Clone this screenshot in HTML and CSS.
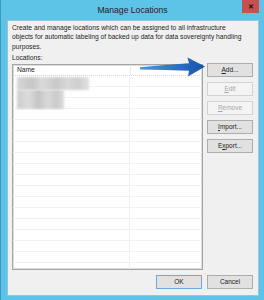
FILE: index.html
```html
<!DOCTYPE html>
<html lang="en">
<head>
	<meta charset="UTF-8">
	<title>Manage Locations</title>
	<link rel="stylesheet" href="styles.css">
</head>
<body>
<div class="window">
	<div class="titlebar">
		<span></span>
		<div class="title">Manage Locations</div>
		<div class="close">&#x2715;</div>
	</div>
	<div class="panel">
		<p class="desc">Create and manage locations which can be assigned to all infrastructure<br>objects for automatic labeling of backed up data for data sovereignty handling<br>purposes.</p>
		<div class="label">Locations:</div>
		<div class="main">
			<div class="list">
				<div class="list-head">
					<div class="col-name">Name</div>
					<div class="col-rest"></div>
				</div>
				<div class="list-body">
					<div class="blur blur-1"></div>
					<div class="blur blur-2"></div>
				</div>
			</div>
			<div class="side">
				<div class="btn"><u>A</u>dd...</div>
				<div class="btn off"><u>E</u>dit</div>
				<div class="btn off"><u>R</u>emove</div>
				<div class="btn"><u>I</u>mport...</div>
				<div class="btn">E<u>x</u>port...</div>
			</div>
		</div>
		<div class="footer">
			<div class="btn default">OK</div>
			<div class="btn">Cancel</div>
		</div>
	</div>
	<!-- arrow pointing at Add -->
	<svg class="arrow" width="264" height="300" viewBox="0 0 264 300">
		<defs>
			<linearGradient id="ag" x1="0" y1="0" x2="1" y2="0">
				<stop offset="0" stop-color="#4c97e0"/>
				<stop offset="1" stop-color="#1553ad"/>
			</linearGradient>
		</defs>
		<path d="M140 67.2 Q165 64.5 189 63.2 L187.5 57.5 L205 66.5 L188 76.5 L189 70.8 Q165 69.5 140 69.4 Z" fill="url(#ag)"/>
	</svg>
</div>
</body>
</html>
```
FILE: styles.css
```css
body{
	margin: 0;
	font-family: "Liberation Sans", Arial, sans-serif;
	color: #1e1e1e;
}
.window{
	position: relative;
	width: 264px;
	height: 300px;
	box-sizing: border-box;
	background: #5ec4e7;
	border-left: 1px solid #3d98c2;
	display: flex;
	flex-direction: column;
}
.titlebar{
	height: 19px;
	display: grid;
	grid-template-columns: 1fr auto 1fr;
	align-items: center;
}
.title{
	font-size: 8.6px;
	color: #222;
	padding-top: 1px;
}
.close{
	justify-self: end;
	align-self: start;
	width: 17px;
	height: 13px;
	margin-right: 5px;
	background: #c75050;
	color: #111;
	font-size: 7px;
	font-weight: bold;
	text-align: center;
	line-height: 13px;
}
.panel{
	flex: 1;
	margin: 1px 5px 4px 6px;
	background: #f0f0f0;
	border: 1px solid #96c7dc;
	padding: 0 5px 6px 4px;
	display: flex;
	flex-direction: column;
	font-size: 6.7px;
}
.desc{
	margin: 2px 0 0;
	line-height: 9.4px;
}
.label{
	margin-top: 2px;
	line-height: 9px;
}
.main{
	display: flex;
	gap: 4px;
	margin-top: 2px;
}
.list{
	width: 192px;
	height: 206px;
	box-sizing: border-box;
	border: 1px solid #a5a5a5;
	box-shadow: inset 0 0 0 1px #dcdcdc;
	background: #fff;
	display: flex;
	flex-direction: column;
}
.list-head{
	display: flex;
	height: 10px;
	border-bottom: 1px dotted #d8d8d8;
}
.col-name{
	width: 113px;
	padding-left: 4px;
	line-height: 10px;
	border-right: 1px solid #ececec;
}
.list-body{
	position: relative;
	flex: 1;
	background:
		linear-gradient(to right, transparent 116px, #f0f0f0 116px, #f0f0f0 117px, transparent 117px),
		repeating-linear-gradient(to bottom, transparent 0, transparent 10px, #f1f1f1 10px, #f1f1f1 11px);
}
.blur{
	margin-left: 4px;
	filter: blur(1.2px);
}
.blur-1{
	width: 72px;
	height: 13px;
	margin-top: 1px;
	background:
		linear-gradient(to right, #d6d6d6 0, #c6c6c6 20%, #dadada 35%, #c9c9c9 55%, #d8d8d8 70%, #cfcfcf 85%, #e2e2e2 100%);
}
.blur-2{
	width: 47px;
	height: 19px;
	background:
		linear-gradient(to right, #cdcdcd 0, #dcdcdc 25%, #c4c4c4 45%, #d9d9d9 65%, #cacaca 85%, #dedede 100%);
}
.side{
	display: flex;
	flex-direction: column;
	gap: 5px;
	margin-top: -1px;
}
.btn{
	width: 46px;
	height: 14px;
	box-sizing: border-box;
	border: 1px solid #adadad;
	background: #e1e1e1;
	text-align: center;
	line-height: 12px;
	font-size: 6.5px;
	color: #222;
}
.btn.off{
	border-color: #d3d3d3;
	background: #f4f4f4;
	color: #a8a8a8;
}
.footer{
	margin-top: auto;
	display: flex;
	justify-content: flex-end;
	gap: 5px;
}
.btn.default{
	border-color: #6fa8dc;
}
.arrow{
	position: absolute;
	left: -1px;
	top: 0;
	pointer-events: none;
}
```
